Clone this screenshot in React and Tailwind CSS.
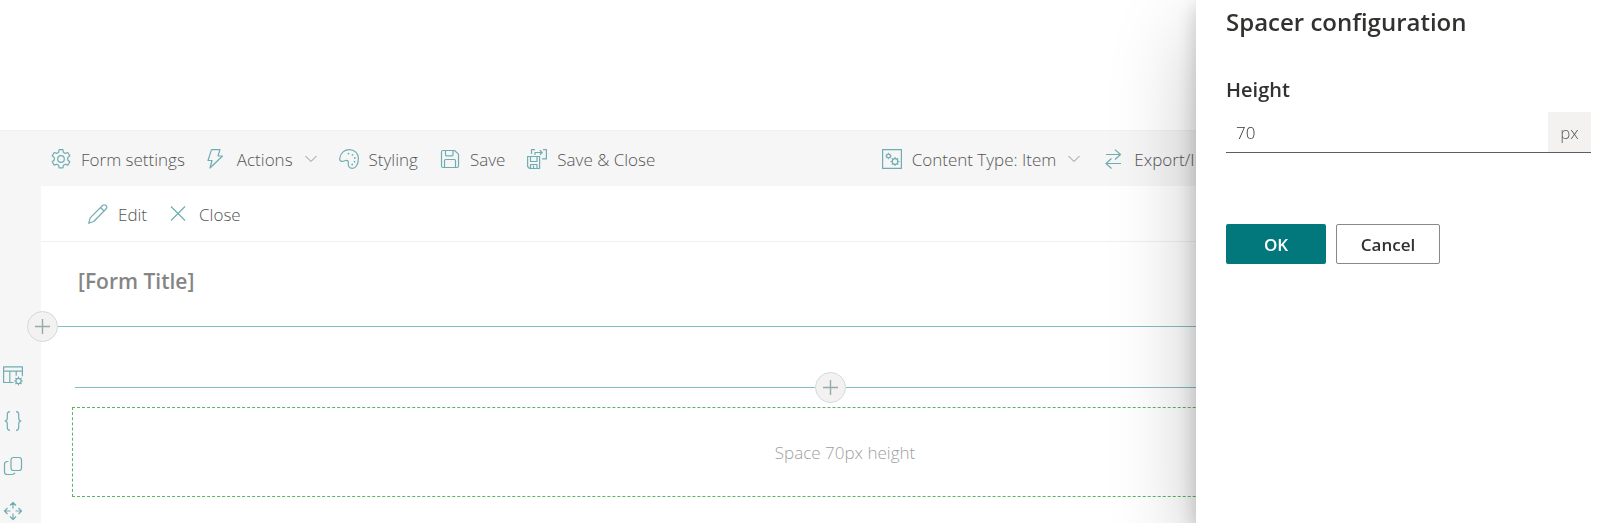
import { useState } from 'react'

function Icon({ children }) {
  return (
    <svg viewBox="0 0 20 20" className="size-5 shrink-0 text-[#6fadb3]" fill="none"
      stroke="currentColor" strokeWidth="1.2" strokeLinejoin="round" aria-hidden="true">
      {children}
    </svg>
  )
}

// toothed wheel, drawn around its own centre
const GEAR = 'M-1.900-9.300h3.800l.5 2.600 1.900 1.100 2.500-.9 2 3.300-2.100 1.800v2.400l2.100 1.800-2 3.300-2.500-.9-1.900 1.100-.5 2.600h-3.800l-.5-2.600-1.900-1.100-2.500.9-2-3.300 2.100-1.800v-2.400l-2.100-1.800 2-3.300 2.500.9 1.900-1.100z'
const COG = 'M0-5v2M0 3v2M-5 0h2M3 0h2M-3.500-3.500l1.400 1.400M2.100 2.100l1.400 1.400M-3.500 3.500l1.400-1.400M2.100-2.100l1.400-1.400'

const SettingsIcon = () => (
  <Icon>
    <path d={GEAR} transform="translate(10 10)" />
    <circle cx="10" cy="10" r="3.300" />
  </Icon>
)

const BoltIcon = () => (
  <Icon>
    <path d="M4.500.6h8.500L11 7h4.500L3 19l2-7.500H1z" />
  </Icon>
)

const PaletteIcon = () => (
  <Icon>
    <path d="M.8 9C1.600 3.800 5.600.6 10.400.6c5.200 0 9 3.900 9 8.900 0 5.600-2.500 9.900-5.900 9.900-3.600 0-4.500-2.600-4.200-5.800.2-2-1.500-2.600-3.600-1.800C2.800 13 .2 12.300.8 9z" />
    <g fill="currentColor" stroke="none">
      <circle cx="9.500" cy="4.600" r=".9" />
      <circle cx="13.500" cy="5.800" r=".9" />
      <circle cx="15.800" cy="9" r=".9" />
      <circle cx="15.500" cy="12.600" r=".9" />
      <circle cx="13.200" cy="15.500" r=".9" />
    </g>
  </Icon>
)

const SaveIcon = () => (
  <Icon>
    <path d="M3 1.500h11.500l4 3.600V17c0 .8-.6 1.500-1.500 1.500H3c-.8 0-1.500-.7-1.500-1.500V3c0-.8.7-1.500 1.500-1.500z" />
    <path d="M5.500 1.500v4.300c0 .6.4 1 1 1h5.500c.6 0 1-.4 1-1V1.500" />
    <path d="M4.500 18.500v-7c0-.6.4-1 1-1h9c.6 0 1 .4 1 1v7" />
  </Icon>
)

const SaveCloseIcon = () => (
  <Icon>
    <path d="M.6 7.500h12v12H2.600l-2-2z" />
    <path d="M3.500 7.500v5h6.500v-5M3.500 19.500v-4h6.500v4M6.500 16.500v3" />
    <path d="M4.500 5V.6H8M16 .6h3.400v9.300H15M8 6V3.500h7M12.800 1.200l2.400 2.300-2.400 2.300" />
  </Icon>
)

const ContentTypeIcon = () => (
  <Icon>
    <path d="M.6.6h18.800v18.800H.6z" />
    <circle cx="6.500" cy="7" r="1.900" />
    <path d={COG} transform="translate(6.500 7) scale(.65)" />
    <circle cx="13" cy="12.500" r="2.800" />
    <path d={COG} transform="translate(13 12.500) scale(.92)" />
  </Icon>
)

const TransferIcon = () => (
  <Icon>
    <path d="M2 5.500h14.500M11 .6l5.500 4.900-5.500 5M17 14.500H2M7.500 9.500L2 14.500l5.500 5" />
  </Icon>
)

const PencilIcon = () => (
  <Icon>
    <path d="M.7 19.300l1.500-5.500L14.500 1.500c1-1 2.600-1 3.500 0s1 2.500 0 3.500L5.700 17.500zM12.500 3.500l4 4" />
  </Icon>
)

const CloseIcon = () => (
  <Icon><path d="M2 2.500l14 14M16 2.500l-14 14" /></Icon>
)

const ChevronIcon = () => (
  <svg viewBox="0 0 12 12" className="ml-0.5 size-3 shrink-0" fill="none" stroke="#909090" aria-hidden="true">
    <path d="M.5 3l5.500 5.500L11.500 3" />
  </svg>
)

const TableSettingsIcon = () => (
  <Icon>
    <path d="M10.500 16.500H.6V.9h18.800v9.300M.6 5.200h18.800M6.800 5.200v11.300M13.200 5.200v4.500" />
    <circle cx="15.500" cy="15" r="2.600" />
    <path d={COG} transform="translate(15.500 15) scale(.88)" />
  </Icon>
)

const BracesIcon = () => (
  <Icon>
    <path d="M7 .7C4.800.7 4.300 1.500 4.300 3.500v3.700c0 1.700-.8 2.500-2.300 2.800 1.500.3 2.300 1.100 2.300 2.800v3.700c0 2 .5 2.800 2.700 2.800M13 .7c2.200 0 2.700.8 2.700 2.800v3.700c0 1.700.8 2.500 2.300 2.800-1.500.3-2.300 1.100-2.300 2.800v3.700c0 2-.5 2.800-2.700 2.800" />
  </Icon>
)

const CopyIcon = () => (
  <Icon>
    <rect x="8" y="1.500" width="10.500" height="13" rx="2.500" />
    <path d="M5.500 5.500h-1C2.800 5.500 1.500 6.600 1.500 8.200V16c0 1.500 1 2.500 2.600 2.500H9c1.600 0 2.500-.8 3-1.800" />
  </Icon>
)

const MoveIcon = () => (
  <Icon>
    <path d="M10 1.500v6M10 12.500v6M1.500 10h6M12.500 10h6M7 4.500l3-3 3 3M7 15.500l3 3 3-3M4.500 7l-3 3 3 3M15.500 7l3 3-3 3" />
  </Icon>
)

function Command({ icon, label, menu }) {
  return (
    <button type="button" className="flex shrink-0 items-center gap-2.5 whitespace-nowrap font-light text-[#555]">
      {icon}
      <span className="pt-0.5">{label}</span>
      {menu && <ChevronIcon />}
    </button>
  )
}

function AddButton({ label }) {
  return (
    <button type="button" aria-label={label}
      className="flex size-[31px] items-center justify-center rounded-full border border-[#cfdcdb] bg-[#f3f2f1]">
      <svg viewBox="0 0 15 15" className="size-[15px]" stroke="#95aaaa" strokeWidth="1.400" aria-hidden="true">
        <path d="M7.500 0v15M0 7.500h15" />
      </svg>
    </button>
  )
}

const TOOLS = [
  { label: 'Table settings', icon: <TableSettingsIcon /> },
  { label: 'Code', icon: <BracesIcon /> },
  { label: 'Copy', icon: <CopyIcon /> },
  { label: 'Move', icon: <MoveIcon /> },
]

function Designer({ height }) {
  return (
    <div className="flex min-h-screen flex-col pt-[130px]">
      <header className="flex h-14 shrink-0 items-center border-t border-[#f0f0f0] bg-[#f6f6f6] pl-[51px]">
        <div className="flex flex-1 items-center gap-[22px]">
          <Command icon={<SettingsIcon />} label="Form settings" />
          <Command icon={<BoltIcon />} label="Actions" menu />
          <Command icon={<PaletteIcon />} label="Styling" />
          <Command icon={<SaveIcon />} label="Save" />
          <Command icon={<SaveCloseIcon />} label="Save & Close" />
        </div>
        <div className="flex w-[45vw] items-center gap-6">
          <Command icon={<ContentTypeIcon />} label="Content Type: Item" menu />
          <Command icon={<TransferIcon />} label="Export/Import" />
        </div>
      </header>

      <div className="flex flex-1">
        <nav className="flex w-[41px] shrink-0 flex-col gap-[25px] bg-[#f6f6f6] pl-[3px] pt-[180px]">
          {TOOLS.map(tool => (
            <button key={tool.label} type="button" aria-label={tool.label} className="w-5">
              {tool.icon}
            </button>
          ))}
        </nav>

        <main className="min-w-0 flex-1">
          <div className="flex h-14 items-center gap-[22px] border-b border-[#f0f0f0] pl-[47px]">
            <Command icon={<PencilIcon />} label="Edit" />
            <Command icon={<CloseIcon />} label="Close" />
          </div>
          <h1 className="pl-[37px] pt-[25px] text-[21px] font-semibold leading-[28px] text-[#858585]">[Form Title]</h1>

          <div className="-ml-[14px] mt-4 flex items-center">
            <AddButton label="Add section" />
            <div className="h-px flex-1 bg-[#84bdbf]" />
          </div>

          <div className="pl-[31px] pr-[17px]">
            <div className="ml-[3px] mt-[30px] flex items-center">
              <div className="h-px flex-1 bg-[#84bdbf]" />
              <AddButton label="Add control" />
              <div className="h-px flex-1 bg-[#84bdbf]" />
            </div>
            <div className="mt-1 flex h-[90px] items-center justify-center border border-dashed border-[#5cb562] pl-8 pt-0.5 font-light text-[#a0a0a0]">
              Space {height}px height
            </div>
          </div>
        </main>
      </div>
    </div>
  )
}

export default function App() {
  const [height, setHeight] = useState('70')

  return (
    <div className="overflow-hidden bg-white font-['Open_Sans',sans-serif] text-[17px] leading-6">
      <Designer height={height} />

      <aside className="fixed inset-y-0 right-0 w-[407px] bg-white pl-[30px] pr-3 text-[#323130] shadow-[0_32px_80px_rgba(0,0,0,0.24),0_6px_20px_rgba(0,0,0,0.20)]">
        <form onSubmit={e => e.preventDefault()}>
          <h2 className="pt-1.5 text-2xl font-semibold">Spacer configuration</h2>
          <label htmlFor="height" className="mt-9 block pt-1 pb-2.5 text-xl leading-6 font-semibold">Height</label>
          <div className="flex h-[41px] border-b border-[#605e5c]">
            <input id="height" value={height} onChange={e => setHeight(e.target.value)}
              className="min-w-0 flex-1 px-2.5 pt-0.5 font-light outline-none" />
            <span className="flex w-[43px] items-center justify-center bg-[#f3f2f1] pt-0.5 font-light text-[#605e5c]">px</span>
          </div>
          <div className="mt-[71px] flex gap-2.5">
            <button type="submit" className="h-10 w-[100px] rounded-xs bg-[#03787c] pt-0.5 font-semibold text-white">OK</button>
            <button type="button" className="h-10 w-[104px] rounded-xs border border-[#8a8886] pt-0.5 font-semibold">Cancel</button>
          </div>
        </form>
      </aside>
    </div>
  )
}
